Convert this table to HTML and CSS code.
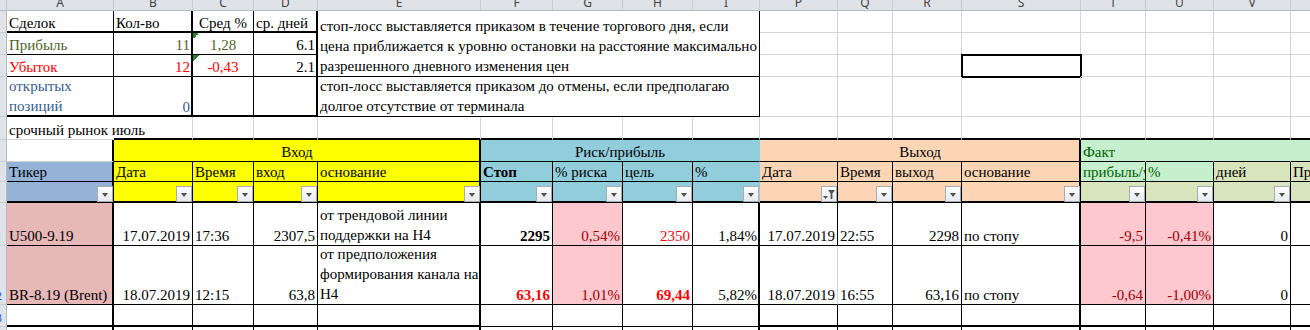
FILE: index.html
```html
<!DOCTYPE html>
<html lang="ru">
<head>
<meta charset="utf-8">
<title>Сделки</title>
<link rel="stylesheet" href="styles.css">
</head>
<body>
<div class="sheet">
  <!-- column headers -->
  <div class="hd"></div>
  <div class="hd">A</div><div class="hd">B</div><div class="hd">C</div><div class="hd">D</div><div class="hd">E</div><div class="hd">F</div><div class="hd">G</div><div class="hd">H</div><div class="hd">I</div><div class="hd">P</div><div class="hd">Q</div><div class="hd">R</div><div class="hd">S</div><div class="hd">T</div><div class="hd">U</div><div class="hd">V</div><div class="hd">W</div>

  <!-- row 1 -->
  <div class="rh"></div>
  <div class="c tb br">Сделок</div>
  <div class="c tb tr">Кол-во</div>
  <div class="c tb br m">Сред %</div>
  <div class="c tb tr">ср. дней</div>
  <div class="c wrap s5 rs3 bb br">стоп-лосс выставляется приказом в течение торгового дня, если<br>цена приближается к уровню остановки на расстояние максимально<br>разрешенного дневного изменения цен</div>
  <div class="c"></div><div class="c"></div><div class="c"></div><div class="c"></div><div class="c"></div><div class="c"></div><div class="c"></div><div class="c"></div>

  <!-- row 2 -->
  <div class="rh"></div>
  <div class="c ol bb br">Прибыль</div>
  <div class="c ol r bb tr">11</div>
  <div class="c ol m tri bb br">1,28</div>
  <div class="c r bb tr">6.1</div>
  <div class="c"></div><div class="c"></div><div class="c"></div><div class="c"></div><div class="c"></div><div class="c"></div><div class="c"></div><div class="c"></div>

  <!-- row 3 -->
  <div class="rh"></div>
  <div class="c rd bb br">Убыток</div>
  <div class="c rd r bb tr">12</div>
  <div class="c rd m tri bb br">-0,43</div>
  <div class="c r bb tr">2.1</div>
  <div class="c"></div><div class="c"></div><div class="c"></div><div class="c sel"></div><div class="c"></div><div class="c"></div><div class="c"></div><div class="c"></div>

  <!-- row 4 -->
  <div class="rh"></div>
  <div class="c wrap bl tb br">открытых<br>позиций</div>
  <div class="c bl r tb tr">0</div>
  <div class="c tb br"></div>
  <div class="c tb tr"></div>
  <div class="c wrap s5 bb br">стоп-лосс выставляется приказом до отмены, если предполагаю<br>долгое отсутствие от терминала</div>
  <div class="c"></div><div class="c"></div><div class="c"></div><div class="c"></div><div class="c"></div><div class="c"></div><div class="c"></div><div class="c"></div>

  <!-- row 5 -->
  <div class="rh"></div>
  <div class="c ov">срочный рынок июль</div>
  <div class="c tb"></div><div class="c tb"></div><div class="c tb"></div><div class="c tb"></div><div class="c tb"></div><div class="c tb"></div><div class="c tb"></div><div class="c tb"></div>
  <div class="c tb"></div><div class="c tb"></div><div class="c tb"></div><div class="c tb"></div><div class="c tb"></div><div class="c tb"></div><div class="c tb"></div><div class="c tb"></div>

  <!-- row 6 -->
  <div class="rh"></div>
  <div class="c tr"></div>
  <div class="c yl s4 m bb tr">Вход</div>
  <div class="c aq s4 m bb">Риск/прибыль</div>
  <div class="c pe s4 m bb tr">Выход</div>
  <div class="c good bb">Факт</div>
  <div class="c good bb"></div><div class="c good bb"></div><div class="c good bb"></div>

  <!-- row 7 -->
  <div class="rh"></div>
  <div class="c tk bb tr">Тикер</div>
  <div class="c yl bb br">Дата</div>
  <div class="c yl bb br">Время</div>
  <div class="c yl bb br">вход</div>
  <div class="c yl bb tr">основание</div>
  <div class="c aq b bb br">Стоп</div>
  <div class="c aq bb br">% риска</div>
  <div class="c aq bb br">цель</div>
  <div class="c aq bb">%</div>
  <div class="c pe bb br">Дата</div>
  <div class="c pe bb br">Время</div>
  <div class="c pe bb br">выход</div>
  <div class="c pe bb tr">основание</div>
  <div class="c good tight bb br">прибыль/убыток</div>
  <div class="c good bb br">%</div>
  <div class="c olv bb br">дней</div>
  <div class="c olv bb br">Примечание</div>

  <!-- row 8: filters -->
  <div class="rh"></div>
  <div class="c f tk tb tr"><span class="fb"></span></div>
  <div class="c f yl tb br"><span class="fb"></span></div>
  <div class="c f yl tb br"><span class="fb"></span></div>
  <div class="c f yl tb br"><span class="fb"></span></div>
  <div class="c f yl tb tr"><span class="fb"></span></div>
  <div class="c f aq tb br"><span class="fb"></span></div>
  <div class="c f aq tb br"><span class="fb"></span></div>
  <div class="c f aq tb br"><span class="fb"></span></div>
  <div class="c f aq tb"><span class="fb"></span></div>
  <div class="c f pe tb br"><span class="fb on"><svg width="14" height="14" viewBox="0 0 14 14"><path d="M1 9h5l-2.5 3z" fill="#505050"/><path d="M6 3h7l-2.6 3.4V12H8.6V6.4z" fill="#505050"/></svg></span></div>
  <div class="c f pe tb br"><span class="fb"></span></div>
  <div class="c f pe tb br"><span class="fb"></span></div>
  <div class="c f pe tb tr"><span class="fb"></span></div>
  <div class="c f olv tb br"><span class="fb"></span></div>
  <div class="c f olv tb br"><span class="fb"></span></div>
  <div class="c f olv tb br"><span class="fb"></span></div>
  <div class="c f olv tb br"><span class="fb"></span></div>

  <!-- row 9 -->
  <div class="rh">11</div>
  <div class="c pk bb tr">U500-9.19</div>
  <div class="c r bb br">17.07.2019</div>
  <div class="c bb br">17:36</div>
  <div class="c r bb br">2307,5</div>
  <div class="c wrap bb tr">от трендовой линии<br>поддержки на Н4</div>
  <div class="c r b bb br">2295</div>
  <div class="c r bad bb br">0,54%</div>
  <div class="c r rd bb br">2350</div>
  <div class="c r bb tr">1,84%</div>
  <div class="c r bb br">17.07.2019</div>
  <div class="c bb br">22:55</div>
  <div class="c r bb br">2298</div>
  <div class="c bb tr">по стопу</div>
  <div class="c r bad bb br">-9,5</div>
  <div class="c r bad bb br">-0,41%</div>
  <div class="c r bb br">0</div>
  <div class="c bb br"></div>

  <!-- row 10 -->
  <div class="rh">12</div>
  <div class="c pk bb tr">BR-8.19 (Brent)</div>
  <div class="c r bb br">18.07.2019</div>
  <div class="c bb br">12:15</div>
  <div class="c r bb br">63,8</div>
  <div class="c wrap bb tr">от предположения<br>формирования канала на<br>Н4</div>
  <div class="c r b rd bb br">63,16</div>
  <div class="c r bad bb br">1,01%</div>
  <div class="c r b rd bb br">69,44</div>
  <div class="c r bb tr">5,82%</div>
  <div class="c r bb">18.07.2019</div>
  <div class="c bb br">16:55</div>
  <div class="c r bb br">63,16</div>
  <div class="c bb tr">по стопу</div>
  <div class="c r bad bb br">-0,64</div>
  <div class="c r bad bb br">-1,00%</div>
  <div class="c r bb br">0</div>
  <div class="c bb br"></div>

  <!-- row 11 -->
  <div class="rh">13</div>
  <div class="c tb tr"></div>
  <div class="c tb br"></div><div class="c tb br"></div><div class="c tb br"></div>
  <div class="c tb tr"></div>
  <div class="c bb br"></div><div class="c bb br"></div><div class="c bb br"></div>
  <div class="c bb tr"></div>
  <div class="c tb br"></div><div class="c tb br"></div><div class="c tb br"></div>
  <div class="c tb tr"></div>
  <div class="c tb br"></div><div class="c tb br"></div><div class="c tb br"></div><div class="c tb br"></div>

  <!-- row 12 -->
  <div class="rh"></div>
  <div class="c tr"></div>
  <div class="c br"></div><div class="c br"></div><div class="c br"></div>
  <div class="c tr"></div>
  <div class="c br"></div><div class="c br"></div><div class="c br"></div>
  <div class="c tr"></div>
  <div class="c br"></div><div class="c br"></div><div class="c br"></div>
  <div class="c tr"></div>
  <div class="c br"></div><div class="c br"></div><div class="c br"></div><div class="c br"></div>
</div>
</body>
</html>
```

FILE: styles.css
```css
* { box-sizing: border-box; }
html, body { margin: 0; padding: 0; background: #fff; }
body { width: 1310px; height: 330px; overflow: hidden; }

.sheet {
  display: grid;
  grid-template-columns: 7px 107px 79px 61px 64px 163px 72px 70px 70px 67px 78px 55px 69px 119px 65px 68px 77px 77px;
  grid-template-rows: 11px 22px 22px 22px 40px 23px 22px 20px 21px 43px 59px 22px 20px;
  width: 1368px;
  font-family: "Liberation Serif", "Times New Roman", serif;
  font-size: 15px;
  line-height: 18px;
  color: #000;
}

/* column header strip (scrolled, top of letters hidden) */
.hd {
  background: #dfe3e8;
  border-right: 1px solid #c8ccd2;
  border-bottom: 1px solid #b4bac2;
  display: flex;
  justify-content: center;
  align-items: flex-end;
  padding-bottom: 3px;
  font: 12px/9px "Noto Sans", "DejaVu Sans", sans-serif;
  color: #444;
  overflow: hidden;
}

/* row header strip (scrolled, only a sliver visible) */
.rh {
  background: #dfe3e8;
  border-right: 1px solid #b4bac2;
  border-bottom: 1px solid #c8ccd2;
  display: flex;
  justify-content: flex-end;
  align-items: flex-end;
  padding: 0 4px 2px 0;
  font: 11px/12px "Noto Sans", "DejaVu Sans", sans-serif;
  color: #1d55d6;
  overflow: hidden;
  white-space: nowrap;
}

/* cells */
.c {
  border-right: 1px solid #d4d4d4;
  border-bottom: 1px solid #d4d4d4;
  display: flex;
  align-items: flex-end;
  padding: 0 2px;
  white-space: nowrap;
  overflow: hidden;
  min-width: 0;
}
.r { justify-content: flex-end; }
.m { justify-content: center; }
.tight { padding-right: 0; }
.wrap { line-height: 20px; }
.ov { overflow: visible; border-right-color: transparent; }
.s4 { grid-column: span 4; }
.s5 { grid-column: span 5; }
.rs3 { grid-row: span 3; }

/* text colours */
.b { font-weight: bold; }
.ol { color: #4f6228; }
.rd { color: #ff0000; }
.bl { color: #366092; }

/* fills (fill hides gridlines) */
.yl { background: #ffff00; border-color: #ffff00; }
.aq { background: #92cddc; border-color: #92cddc; }
.pe { background: #fcd5b4; border-color: #fcd5b4; }
.tk { background: #95b3d7; border-color: #95b3d7; }
.pk { background: #e6b8b7; border-color: #e6b8b7; }
.good { background: #c6efce; border-color: #c6efce; color: #006100; }
.olv { background: #d8e4bc; border-color: #d8e4bc; }
.bad { background: #ffc7ce; border-color: #ffc7ce; color: #9c0006; }

/* error-indicator triangle */
.tri {
  background-image: linear-gradient(135deg, #1f8a1f 0 50%, transparent 50%);
  background-size: 6px 6px;
  background-repeat: no-repeat;
}

/* borders */
.bb { border-bottom-color: #000; }
.br { border-right-color: #000; }
.tb { border-bottom-color: #000; box-shadow: inset 0 -1px 0 #000; }
.tr { border-right-color: #000; box-shadow: inset -1px 0 0 #000; }
.tb.tr { box-shadow: inset 0 -1px 0 #000, inset -1px 0 0 #000; }

/* selected cell */
.sel { outline: 2px solid #000; outline-offset: -1px; }

/* autofilter buttons */
.f { padding: 0; justify-content: flex-end; }
.fb {
  flex: none;
  width: 16px;
  height: 16px;
  border: 1px solid #a7adb5;
  background: linear-gradient(#fdfdfd, #e8ebef);
  display: flex;
  align-items: center;
  justify-content: center;
}
.fb::after {
  content: "";
  border-left: 3.5px solid transparent;
  border-right: 3.5px solid transparent;
  border-top: 4px solid #505050;
  margin-top: 1px;
}
.fb.on::after { display: none; }
.fb svg { display: block; }
```
